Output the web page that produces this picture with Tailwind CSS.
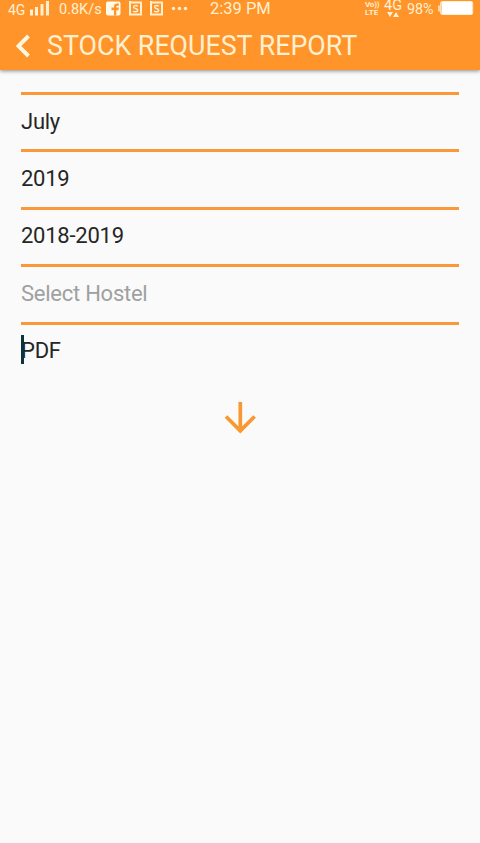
<!DOCTYPE html>
<html lang="en">
<head>
<meta charset="utf-8">
<meta name="viewport" content="width=device-width">
<title>Stock Request Report</title>
<script src="https://cdn.jsdelivr.net/npm/@tailwindcss/browser@4"></script>
</head>
<body class="h-[843px] overflow-hidden bg-[#fafafa] font-[Roboto,sans-serif]">
<header class="h-[70px] bg-[#ff942b] text-[#fff0cf] shadow-[0_1px_4px_rgba(0,0,0,0.45)]">
  <div class="flex h-[19px] items-start whitespace-nowrap pl-2 text-[14px] leading-[18px]">
    <span class="w-[22px] pt-[2px] text-[14px] leading-[17px]">4G</span>
    <svg class="h-[18px] w-[20px] shrink-0" viewBox="0 0 20 18" fill="currentColor"><path d="M0 9.500h3v6H0zM5 7h3v8.500H5zM10.500 4h3v11.500h-3zM16 1h3v14.500h-3z"/></svg>
    <span class="ml-[9px] w-[47px] pt-px text-[14.500px]">0.8K/s</span>
    <svg class="h-[18px] w-[15px] shrink-0" viewBox="0 0 15 18"><rect y="1.500" width="14.500" height="14" rx="2" fill="#fffbea"/><path d="M8 15.500V10.200H5.500V7.500H8V6.200c0-1.800 1-2.700 3-2.700h1.800v2.300h-1.600c-.6 0-.9.3-.9.900v.8h2.500l-.3 2.700h-2.200v5.300z" fill="#ff942b"/></svg>
    <svg class="ml-2 h-[18px] w-[13px] shrink-0" viewBox="0 0 13 18" fill="none" stroke="currentColor"><path d="M1 1v13.500h11v-12H1" stroke-width="2"/><path d="M8.700 6.300C8 5.200 4.500 5.100 4.500 7c0 2 4.200 1.100 4.200 3.300 0 2-3.700 1.800-4.400.5" stroke-width="1.500"/></svg>
    <svg class="ml-2 h-[18px] w-[13px] shrink-0" viewBox="0 0 13 18" fill="none" stroke="currentColor"><path d="M1 1v13.500h11v-12H1" stroke-width="2"/><path d="M8.700 6.300C8 5.200 4.500 5.100 4.500 7c0 2 4.200 1.100 4.200 3.300 0 2-3.700 1.800-4.400.5" stroke-width="1.500"/></svg>
    <svg class="ml-2 h-[18px] w-[17px] shrink-0" viewBox="0 0 17 18" fill="currentColor"><circle cx="2.500" cy="8.500" r="1.700"/><circle cx="8.500" cy="8.500" r="1.700"/><circle cx="14.500" cy="8.500" r="1.700"/></svg>
    <span class="ml-[22px] w-[155px] text-[16.500px]">2:39 PM</span>
    <span class="flex w-[19px] flex-col text-[8px] font-bold"><span class="h-[8px] leading-[9px] tracking-[-0.2px]">Vo))</span><span class="h-[8px] leading-[9px] tracking-[0.2px]">LTE</span></span>
    <span class="flex w-[23px] flex-col"><span class="h-[12px] text-[14.500px] leading-[12px]">4G</span><svg class="ml-[3px] h-[6px] w-[13px]" viewBox="0 0 13 6" fill="currentColor"><path d="M0 0h6L3 5zM6 5h6L9 0z"/></svg></span>
    <span class="w-[31px] text-[14.300px]">98%</span>
    <svg class="h-[18px] w-[36px] shrink-0" viewBox="0 0 36 18" fill="none"><path d="M1 5.500v6" stroke="currentColor" stroke-width="1.500"/><rect x="2.700" y="1.500" width="32" height="13" rx="1.500" stroke="currentColor"/><rect x="3.500" y="2" width="30.500" height="12" fill="#fff"/></svg>
  </div>
  <div class="flex h-[53px] items-center pl-[14px]">
    <svg class="h-[26px] w-[18px] shrink-0" viewBox="0 0 18 26" fill="none" stroke="#fff6df" stroke-width="3.900"><path d="M14.500 3 4.500 13l10 10"/></svg>
    <h1 class="ml-[15px] whitespace-nowrap text-[26.800px] leading-[30px] text-[#fff0cf]">STOCK REQUEST REPORT</h1>
  </div>
</header>
<main class="mx-[21px] mt-[22px] text-[22px] leading-[26px] tracking-[-0.25px] text-[#262626]">
  <div class="flex h-[57.400px] items-center border-t-3 border-[#fb983a] pb-px">July</div>
  <div class="flex h-[57.400px] items-center border-t-3 border-[#fb983a] pb-px">2019</div>
  <div class="flex h-[57.400px] items-center border-t-3 border-[#fb983a] pb-px">2018-2019</div>
  <div class="flex h-[57.400px] items-center border-t-3 border-[#fb983a] pb-px text-[#a0a0a0]">Select Hostel</div>
  <div class="relative flex h-[57.400px] items-center border-t-3 border-[#fb983a] pb-px">PDF<span class="absolute top-[10px] left-0 h-[29px] w-[2.500px] bg-[#0d3438]"></span></div>
  <svg class="mx-auto mt-[21px] h-[36px] w-[36px]" viewBox="0 0 36 36" fill="none" stroke="#f79830" stroke-width="3.700"><path d="M18.300 2v29M4 16.500l14.300 14.300L32.600 16.500"/></svg>
</main>
</body>
</html>
